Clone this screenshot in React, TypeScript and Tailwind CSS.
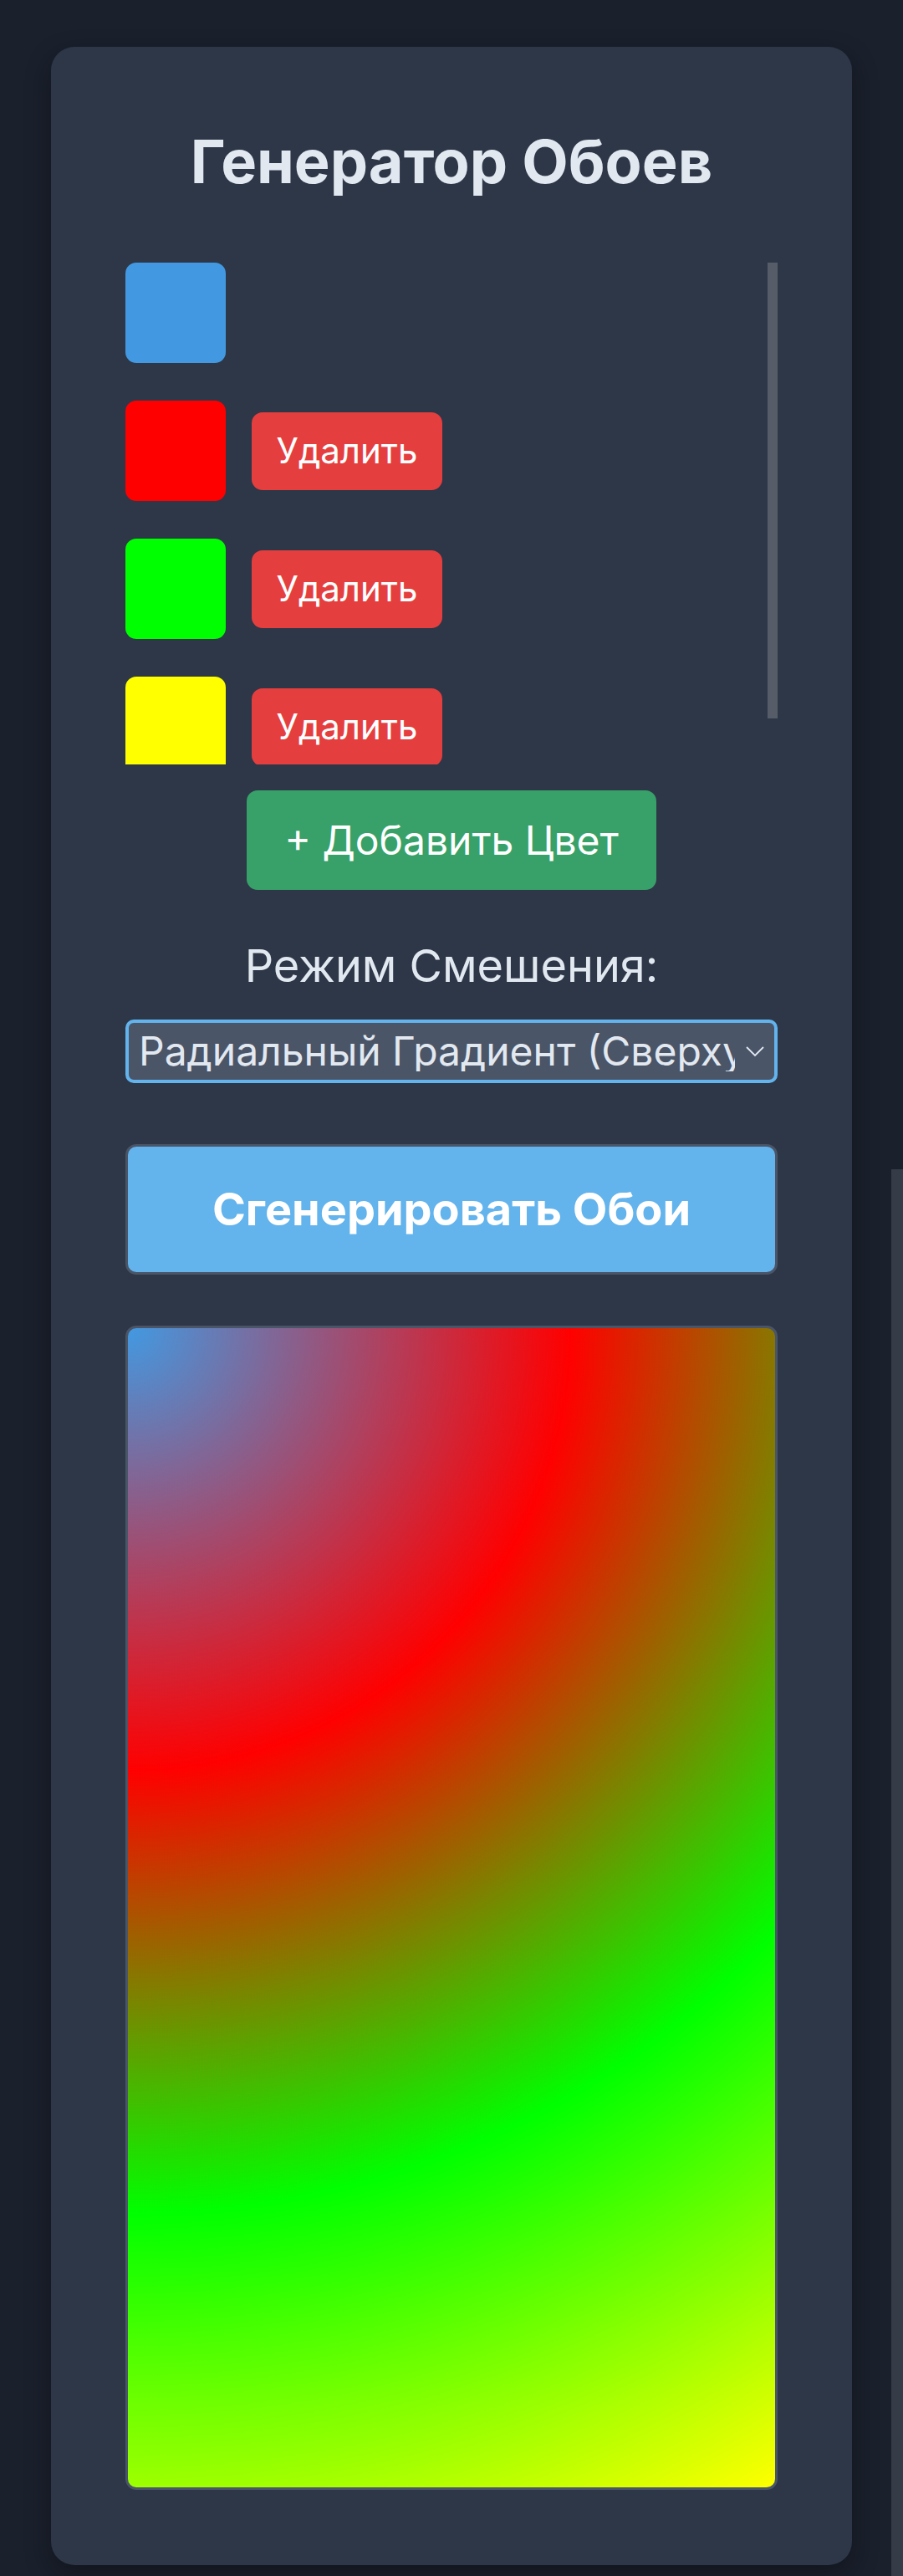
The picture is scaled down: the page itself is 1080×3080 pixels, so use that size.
import { useState } from "react";

const initialColors = ["#4299e1", "#ff0000", "#00ff00", "#ffff00"];

function ColorRow({ color, removable }: { color: string; removable: boolean }) {
  return (
    <div className="mb-[45px] flex items-center gap-[31px]">
      <div
        className="h-[120px] w-[120px] shrink-0 rounded-[13px]"
        style={{ backgroundColor: color }}
      />
      {removable && (
        <button className="h-[93px] w-[228px] rounded-[13px] bg-[#e53e3e] text-[42px] leading-none text-white">
          Удалить
        </button>
      )}
    </div>
  );
}

export default function App() {
  const [colors] = useState(initialColors);
  const [mode, setMode] = useState("radial-tl");

  return (
    <div className="min-h-screen bg-[#1a202c] px-[61px] pt-[56px] pb-[15px] font-['Inter','Noto_Sans',sans-serif]">
      <div className="rounded-[28px] bg-[#2d3748] px-[89px] pt-[94px] pb-[90px] shadow-[0_12px_30px_rgba(0,0,0,0.35)]">
        <h1 className="text-center text-[72px] font-bold leading-[1.2] text-[#e2e8f0]">
          Генератор Обоев
        </h1>

        <div className="relative mt-[78px] h-[600px] overflow-hidden">
          {colors.map((c, i) => (
            <ColorRow key={`${c}-${i}`} color={c} removable={i > 0} />
          ))}
          <div className="absolute right-0 top-0 h-[545px] w-[12px] bg-[#565d69]" />
        </div>

        <div className="mt-[31px] flex justify-center">
          <button className="h-[119px] w-[490px] rounded-[13px] bg-[#38a169] text-[48px] leading-none text-white">
            + Добавить Цвет
          </button>
        </div>

        <label className="mt-[50px] mb-[24px] block text-center text-[54px] leading-[81px] text-[#e2e8f0]">
          Режим Смешения:
        </label>

        <div className="relative">
          <select
            value={mode}
            onChange={(e) => setMode(e.target.value)}
            className="h-[76px] w-full appearance-none rounded-[10px] border-[4px] border-[#63b3ed] bg-[#4a5568] pl-[12px] pr-[47px] text-[48px] leading-none text-[#e2e8f0] outline-none"
          >
            <option value="radial-tl">Радиальный Градиент (Сверху Слева)</option>
            <option value="linear">Линейный Градиент</option>
          </select>
          <svg
            className="pointer-events-none absolute right-[14px] top-1/2 h-[26px] w-[26px] -translate-y-1/2 text-[#e2e8f0]"
            viewBox="0 0 26 26"
            fill="none"
            stroke="currentColor"
            strokeWidth="1.8"
          >
            <path d="M3 8l10 10 10-10" />
          </svg>
        </div>

        <button className="mt-[73px] h-[156px] w-full rounded-[13px] border-[3px] border-[#4a5568] bg-[#63b3ed] text-[54px] font-bold leading-none text-white">
          Сгенерировать Обои
        </button>

        <div className="mt-[61px] h-[1392px] w-full rounded-[13px] border-[3px] border-[#4a5568] bg-[radial-gradient(circle_at_top_left,#4299e1,#ff0000,#00ff00,#ffff00)]" />
      </div>
      <div className="fixed right-0 top-[1398px] h-[1682px] w-[14px] bg-[#363c47]" />
    </div>
  );
}
